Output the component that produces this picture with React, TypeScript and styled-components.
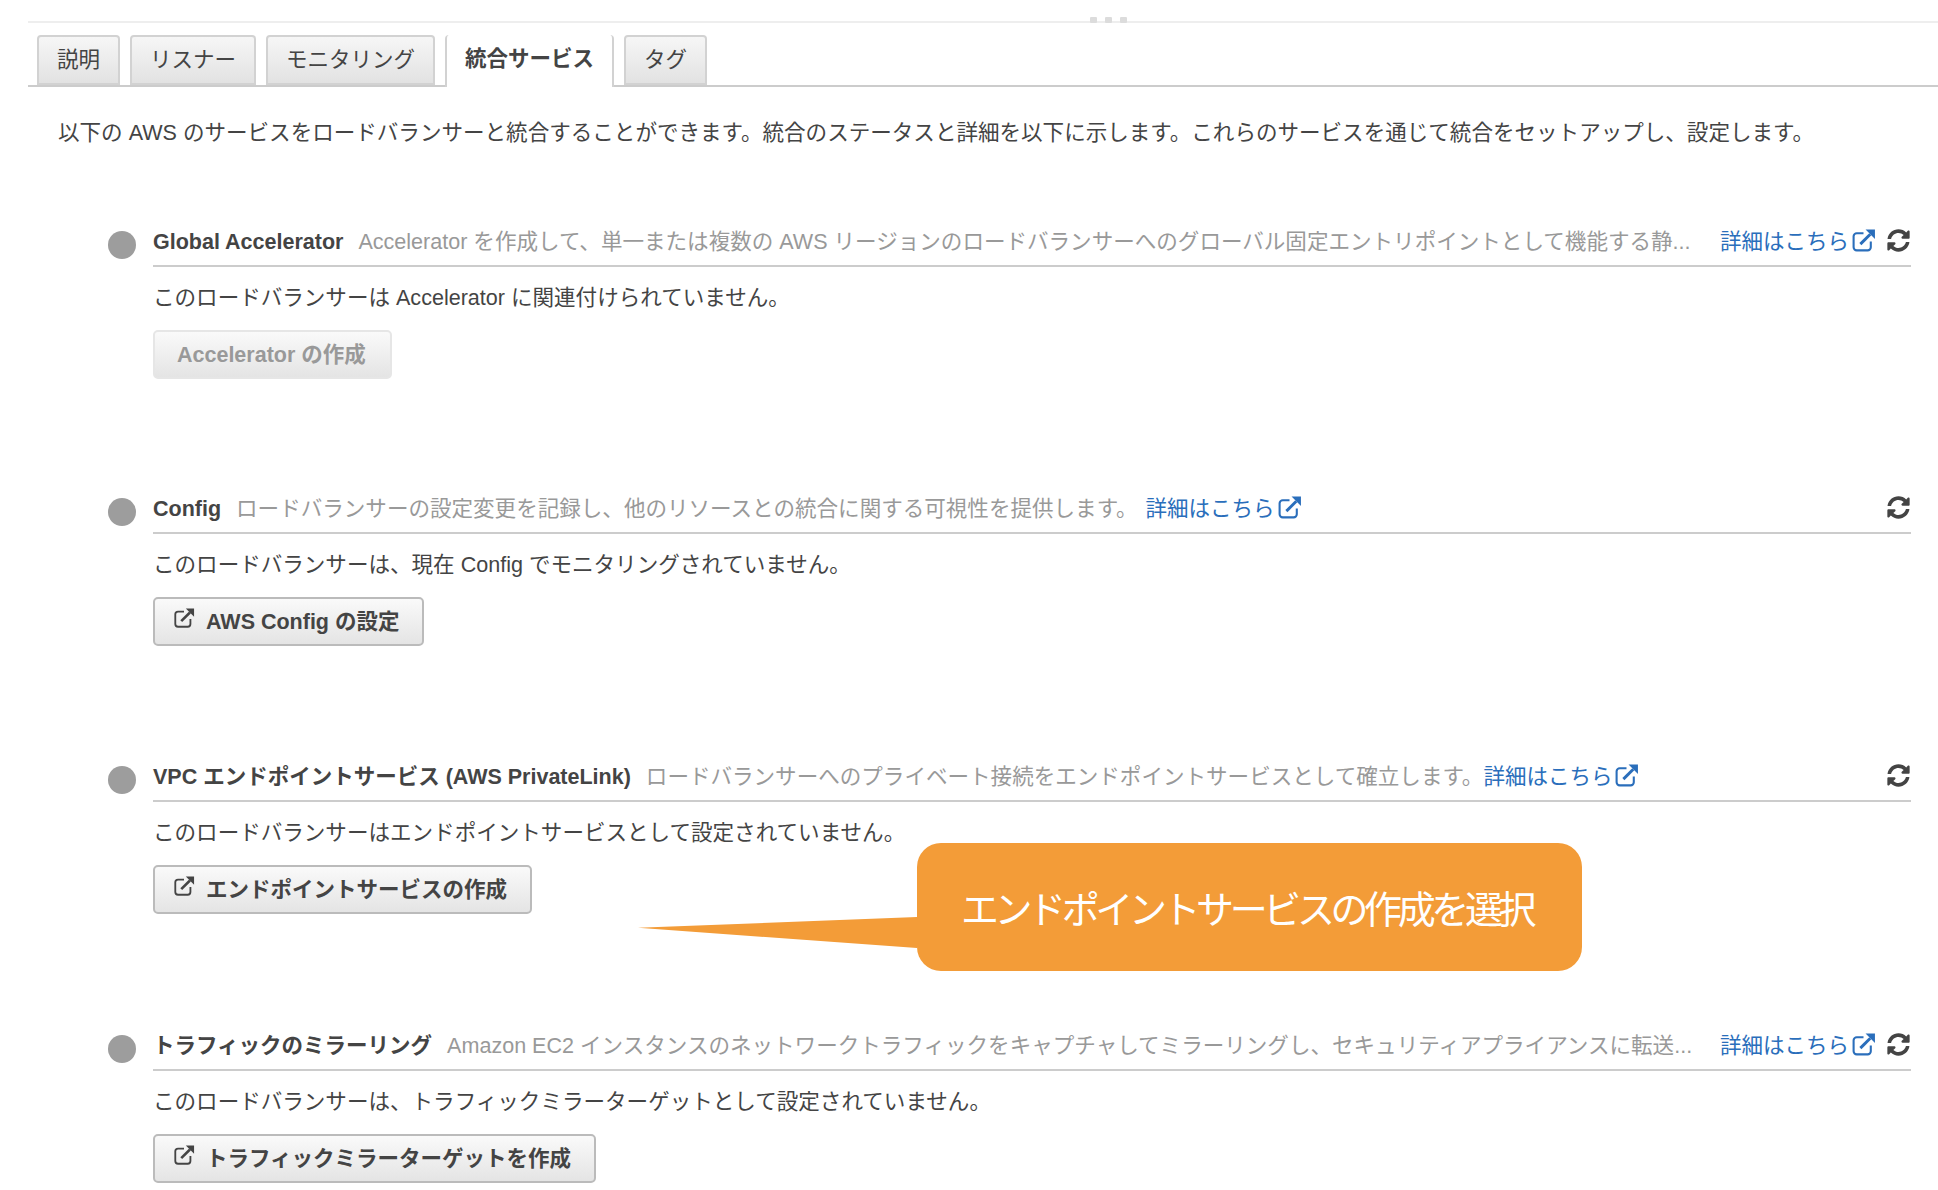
import React from "react"
import styled, { createGlobalStyle } from "styled-components"

const GlobalStyle = createGlobalStyle`
  html, body {
    margin: 0;
    padding: 0;
    background: #fff;
  }
  body {
    font-family: "Liberation Sans", "Noto Sans CJK JP", sans-serif;
    color: #444;
  }
`

const ExternalIcon = (props: { size: number }) => (
  <svg width={props.size} height={props.size} viewBox="0 0 24 24" fill="none">
    <path d="M12 5H5.5A3 3 0 0 0 2.5 8v10.5a3 3 0 0 0 3 3H16a3 3 0 0 0 3-3V13" stroke="currentColor" strokeWidth="2" />
    <path d="M9 15.5L18.5 6" stroke="currentColor" strokeWidth="2.8" />
    <path d="M14 1.5h9v9z" fill="currentColor" />
  </svg>
)

const RefreshIcon = () => (
  <svg width="23" height="23" viewBox="0 0 512 512" fill="#444">
    <path d="M370.7 133.3C339.5 104 298.9 88 255.8 88c-77.5.1-144.3 53.2-162.8 126.9-1.3 5.4-6.1 9.2-11.7 9.2H24.1c-7.5 0-13.2-6.8-11.8-14.2C33.9 94.9 134.8 8 256 8c66.4 0 126.8 26.1 171.3 68.7L463 41C478.1 25.9 504 36.6 504 57.9V192c0 13.3-10.7 24-24 24H345.9c-21.4 0-32.1-25.9-17-41l41.8-41.7zM32 296h134.1c21.4 0 32.1 25.9 17 41l-41.8 41.8c31.3 29.3 71.8 45.3 114.9 45.2 77.4-.1 144.3-53.1 162.8-126.8 1.3-5.4 6.1-9.2 11.7-9.2h57.3c7.5 0 13.2 6.8 11.8 14.2C478.1 417.1 377.2 504 256 504c-66.4 0-126.8-26.1-171.3-68.7L49 471c-15.1 15.1-41 4.4-41-16.9V320c0-13.3 10.7-24 24-24z" />
  </svg>
)

type Integration = {
  title: string
  description: string
  message: string
  button: string
  external: boolean
  fill: boolean
  linkGap: number
  height: number
}

const integrations: Integration[] = [
  {
    title: "Global Accelerator",
    description: "Accelerator を作成して、単一または複数の AWS リージョンのロードバランサーへのグローバル固定エントリポイントとして機能する静...",
    message: "このロードバランサーは Accelerator に関連付けられていません。",
    button: "Accelerator の作成",
    external: false,
    fill: true,
    linkGap: 15,
    height: 267,
  },
  {
    title: "Config",
    description: "ロードバランサーの設定変更を記録し、他のリソースとの統合に関する可視性を提供します。",
    message: "このロードバランサーは、現在 Config でモニタリングされていません。",
    button: "AWS Config の設定",
    external: true,
    fill: false,
    linkGap: 8,
    height: 268,
  },
  {
    title: "VPC エンドポイントサービス (AWS PrivateLink)",
    description: "ロードバランサーへのプライベート接続をエンドポイントサービスとして確立します。",
    message: "このロードバランサーはエンドポイントサービスとして設定されていません。",
    button: "エンドポイントサービスの作成",
    external: true,
    fill: false,
    linkGap: 0,
    height: 269,
  },
  {
    title: "トラフィックのミラーリング",
    description: "Amazon EC2 インスタンスのネットワークトラフィックをキャプチャしてミラーリングし、セキュリティアプライアンスに転送...",
    message: "このロードバランサーは、トラフィックミラーターゲットとして設定されていません。",
    button: "トラフィックミラーターゲットを作成",
    external: true,
    fill: true,
    linkGap: 15,
    height: 120,
  },
]

const tabs = ["説明", "リスナー", "モニタリング", "統合サービス", "タグ"]

export default function App() {
  return (
    <Page>
      <GlobalStyle />
      <Grip>
        <i />
        <i />
        <i />
      </Grip>
      <TabBar>
        {tabs.map(t => (
          <Tab key={t} $active={t === "統合サービス"}>
            {t}
          </Tab>
        ))}
      </TabBar>
      <Intro>以下の AWS のサービスをロードバランサーと統合することができます。統合のステータスと詳細を以下に示します。これらのサービスを通じて統合をセットアップし、設定します。</Intro>
      <List>
        {integrations.map(item => (
          <Row key={item.title} $height={item.height}>
            <Dot />
            <Body>
              <Header>
                <Title>{item.title}</Title>
                <Description $fill={item.fill}>{item.description}</Description>
                <MoreLink $gap={item.linkGap}>
                  詳細はこちら
                  <ExternalIcon size={25} />
                </MoreLink>
                <Refresh>
                  <RefreshIcon />
                </Refresh>
              </Header>
              <Message>{item.message}</Message>
              <ActionButton disabled={!item.external}>
                {item.external && (
                  <ButtonIcon>
                    <ExternalIcon size={22} />
                  </ButtonIcon>
                )}
                {item.button}
              </ActionButton>
            </Body>
          </Row>
        ))}
      </List>
      <Callout>
        <CalloutTail />
        エンドポイントサービスの作成を選択
      </Callout>
    </Page>
  )
}

const Page = styled.div`
  position: relative;
  width: 1938px;
  height: 1190px;
  overflow: hidden;
  box-sizing: border-box;
  padding: 21px 0 0 28px;
`

const Grip = styled.div`
  position: absolute;
  top: 17px;
  left: 1090px;
  display: flex;
  gap: 8px;

  i {
    width: 7px;
    height: 6px;
    border-radius: 1px;
    background: #dcdcdc;
  }
`

const TabBar = styled.div`
  display: flex;
  align-items: flex-end;
  gap: 10px;
  height: 66px;
  box-sizing: border-box;
  padding-left: 9px;
  border-top: 2px solid #eee;
  border-bottom: 2px solid #ccc;
`

const Tab = styled.div<{ $active: boolean }>`
  box-sizing: border-box;
  height: ${p => (p.$active ? "52px" : "50px")};
  margin-bottom: ${p => (p.$active ? "-2px" : "0")};
  padding: 0 18px ${p => (p.$active ? "9px" : "6px")};
  display: flex;
  align-items: center;
  font-size: 21.5px;
  font-weight: ${p => (p.$active ? "700" : "400")};
  color: #444;
  border: 2px solid #d2d2d2;
  border-bottom: ${p => (p.$active ? "0" : "2px solid #d2d2d2")};
  border-top: ${p => (p.$active ? "0" : "2px solid #d2d2d2")};
  border-radius: 4px 4px 0 0;
  background: ${p => (p.$active ? "#fff" : "linear-gradient(#f6f6f6, #e2e2e2)")};
`

const Intro = styled.p`
  margin: 0;
  padding: 31px 0 0 30px;
  font-size: 21.56px;
  line-height: 30px;
  white-space: nowrap;
  color: #444;
`

const List = styled.div`
  display: flex;
  flex-direction: column;
  margin-top: 69px;
  padding-left: 80px;
  padding-right: 27px;
`

const Row = styled.div<{ $height: number }>`
  display: flex;
  gap: 17px;
  height: ${p => p.$height}px;
`

const Dot = styled.span`
  flex: none;
  width: 28px;
  height: 28px;
  margin-top: 14px;
  border-radius: 50%;
  background: #9d9d9d;
`

const Body = styled.div`
  flex: 1;
  min-width: 0;
`

const Header = styled.div`
  display: flex;
  align-items: center;
  height: 46px;
  padding-top: 2px;
  line-height: 30px;
  border-bottom: 2px solid #ccc;
  white-space: nowrap;
`

const Title = styled.span`
  font-size: 21.5px;
  font-weight: 700;
  color: #444;
`

const Description = styled.span<{ $fill: boolean }>`
  flex: ${p => (p.$fill ? "1" : "none")};
  min-width: 0;
  margin-left: 15px;
  font-size: 21.56px;
  color: #999;
`

const MoreLink = styled.a<{ $gap: number }>`
  display: inline-flex;
  align-items: center;
  gap: 2px;
  margin-left: ${p => p.$gap}px;
  font-size: 21.5px;
  color: #2a6ebb;

  svg {
    margin-top: -3px;
  }
`

const Refresh = styled.span`
  display: flex;
  margin-left: auto;
  padding: 0 1px 3px 11px;
`

const Message = styled.p`
  margin: 16px 0 0;
  font-size: 21.56px;
  line-height: 30px;
  color: #444;
`

const ActionButton = styled.button`
  display: flex;
  align-items: center;
  gap: 11px;
  box-sizing: border-box;
  height: 49px;
  margin-top: 17px;
  padding: 0 23px 4px 18px;
  font-family: inherit;
  font-size: 21.5px;
  font-weight: 700;
  color: #444;
  border: 2px solid #bbb;
  border-radius: 5px;
  background: linear-gradient(#fafafa, #e4e4e4);

  &:disabled {
    padding-left: 22px;
    padding-right: 24px;
    color: #999;
    border-color: #e6e6e6;
  }
`

const ButtonIcon = styled.span`
  display: flex;
  margin-top: -3px;
`

const Callout = styled.div`
  position: absolute;
  left: 917px;
  top: 843px;
  width: 665px;
  height: 128px;
  box-sizing: border-box;
  padding: 0 6px 2px 0;
  display: flex;
  align-items: center;
  justify-content: center;
  border-radius: 24px;
  background: #f39c38;
  color: #fff;
  font-size: 38px;
  letter-spacing: -4.4px;
`

const CalloutTail = styled.span`
  position: absolute;
  right: 100%;
  top: 74px;
  width: 279px;
  height: 31px;
  background: #f39c38;
  clip-path: polygon(0 35%, 100% 0, 100% 100%);
`
